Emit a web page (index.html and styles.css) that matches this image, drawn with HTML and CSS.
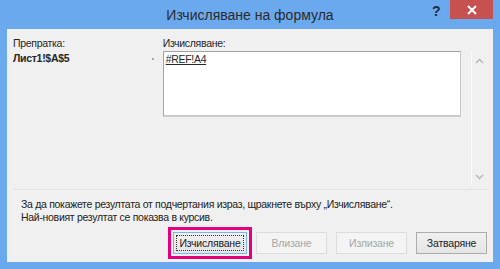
FILE: index.html
```html
<!DOCTYPE html>
<html lang="bg">
<head>
  <meta charset="UTF-8">
  <title>Изчисляване на формула</title>
  <link rel="stylesheet" href="styles.css">
</head>
<body>
  <div class="window">
    <div class="titlebar">
      <span class="title">Изчисляване на формула</span>
      <span class="help">?</span>
      <span class="close">
        <svg width="10" height="10" viewBox="0 0 10 10"><path d="M1 1L9 9M9 1L1 9" stroke="#fff" stroke-width="2"/></svg>
      </span>
    </div>

    <div class="client">
      <div class="main">
        <div class="ref">
          <div class="label">Препратка:</div>
          <div class="ref-row">
            <b>Лист1!$A$5</b>
            <span class="dot"></span>
          </div>
        </div>
        <div class="eval">
          <div class="label">Изчисляване:</div>
          <div class="box"><u>#REF!A4</u></div>
        </div>
        <div class="scroll">
          <svg width="9" height="6" viewBox="0 0 9 6"><path d="M1 5L4.5 1.5L8 5" fill="none" stroke="#b4b4b4" stroke-width="1.3"/></svg>
          <svg width="9" height="6" viewBox="0 0 9 6"><path d="M1 1L4.5 4.5L8 1" fill="none" stroke="#b4b4b4" stroke-width="1.3"/></svg>
        </div>
      </div>

      <div class="sep"></div>

      <p class="hint">За да покажете резултата от подчертания израз, щракнете върху „Изчисляване“.<br>Най-новият резултат се показва в курсив.</p>

      <div class="buttons">
        <button class="btn focused"><span>Изчисляване</span></button>
        <button class="btn" disabled>Влизане</button>
        <button class="btn" disabled>Излизане</button>
        <button class="btn">Затваряне</button>
      </div>
    </div>
  </div>
</body>
</html>
```

FILE: styles.css
```css
body {
  margin: 0;
  font-family: "Liberation Sans", Arial, sans-serif;
  font-size: 10.5px;
  letter-spacing: -0.3px;
  color: #262626;
}
.window {
  width: 500px;
  height: 269px;
  background: #6ba9ef;
  display: flex;
  flex-direction: column;
}
.titlebar {
  height: 29px;
  position: relative;
}
.title {
  position: absolute;
  left: 0;
  right: 0;
  top: 6px;
  text-align: center;
  font-size: 14px;
  letter-spacing: 0;
  line-height: 18px;
  color: #2b2b2b;
}
.help {
  position: absolute;
  left: 432px;
  top: 4px;
  font-weight: bold;
  font-size: 14px;
  line-height: 15px;
  color: #1e2a3a;
}
.close {
  position: absolute;
  left: 450px;
  top: 0;
  width: 43px;
  height: 19px;
  background: #c75050;
  display: flex;
  align-items: center;
  justify-content: center;
}
.client {
  margin: 0 7px;
  height: 233px;
  background: #f0f0f0;
  padding: 7px 6px 8px 6px;
  box-sizing: border-box;
  display: flex;
  flex-direction: column;
}
.main {
  display: flex;
  height: 150px;
}
.label {
  line-height: 15px;
  height: 15px;
}
.ref {
  width: 150px;
}
.ref-row {
  display: flex;
  align-items: center;
  justify-content: space-between;
  line-height: 15px;
}
.ref-row b {
  font-weight: bold;
}
.dot {
  width: 2px;
  height: 2px;
  background: #a8a8a8;
  margin-right: 9px;
}
.eval {
  width: 299px;
}
.box {
  height: 66px;
  box-sizing: border-box;
  background: #fff;
  border: 1px solid;
  border-color: #a3a3a3 #c9c9c9 #c9c9c9 #a3a3a3;
  border-bottom-width: 2px;
  padding: 0 2px;
  line-height: 15px;
}
.scroll {
  margin: 15px 0 0 10px;
  width: 16px;
  height: 135px;
  border-left: 1px solid #fafafa;
  display: flex;
  flex-direction: column;
  justify-content: space-between;
  align-items: center;
  padding: 7px 0 6px;
  box-sizing: border-box;
}
.sep {
  margin-top: 3px;
  height: 1px;
  background: #e3e3e3;
  width: 476px;
}
.hint {
  margin: 8px 0 0 8px;
  line-height: 13px;
  color: #222;
}
.buttons {
  margin-top: 8px;
  display: flex;
  justify-content: flex-end;
  gap: 9px;
}
.btn {
  width: 71px;
  height: 22px;
  font-family: inherit;
  font-size: 10.5px;
  letter-spacing: -0.2px;
  color: #222;
  background: linear-gradient(#f0f0f0, #e5e5e5);
  border: 1px solid #acacac;
  padding: 0;
}
.btn:disabled {
  background: #f4f4f4;
  border-color: #dcdcdc;
  color: #a6a6a6;
}
.btn.focused {
  width: 74px;
  border-color: #7eb4ea;
  outline: 3px solid #e4007c;
  outline-offset: 2px;
  padding: 2px;
}
.btn.focused span {
  display: block;
  height: 100%;
  box-sizing: border-box;
  border: 1px dotted #333;
  line-height: 14px;
}
```
